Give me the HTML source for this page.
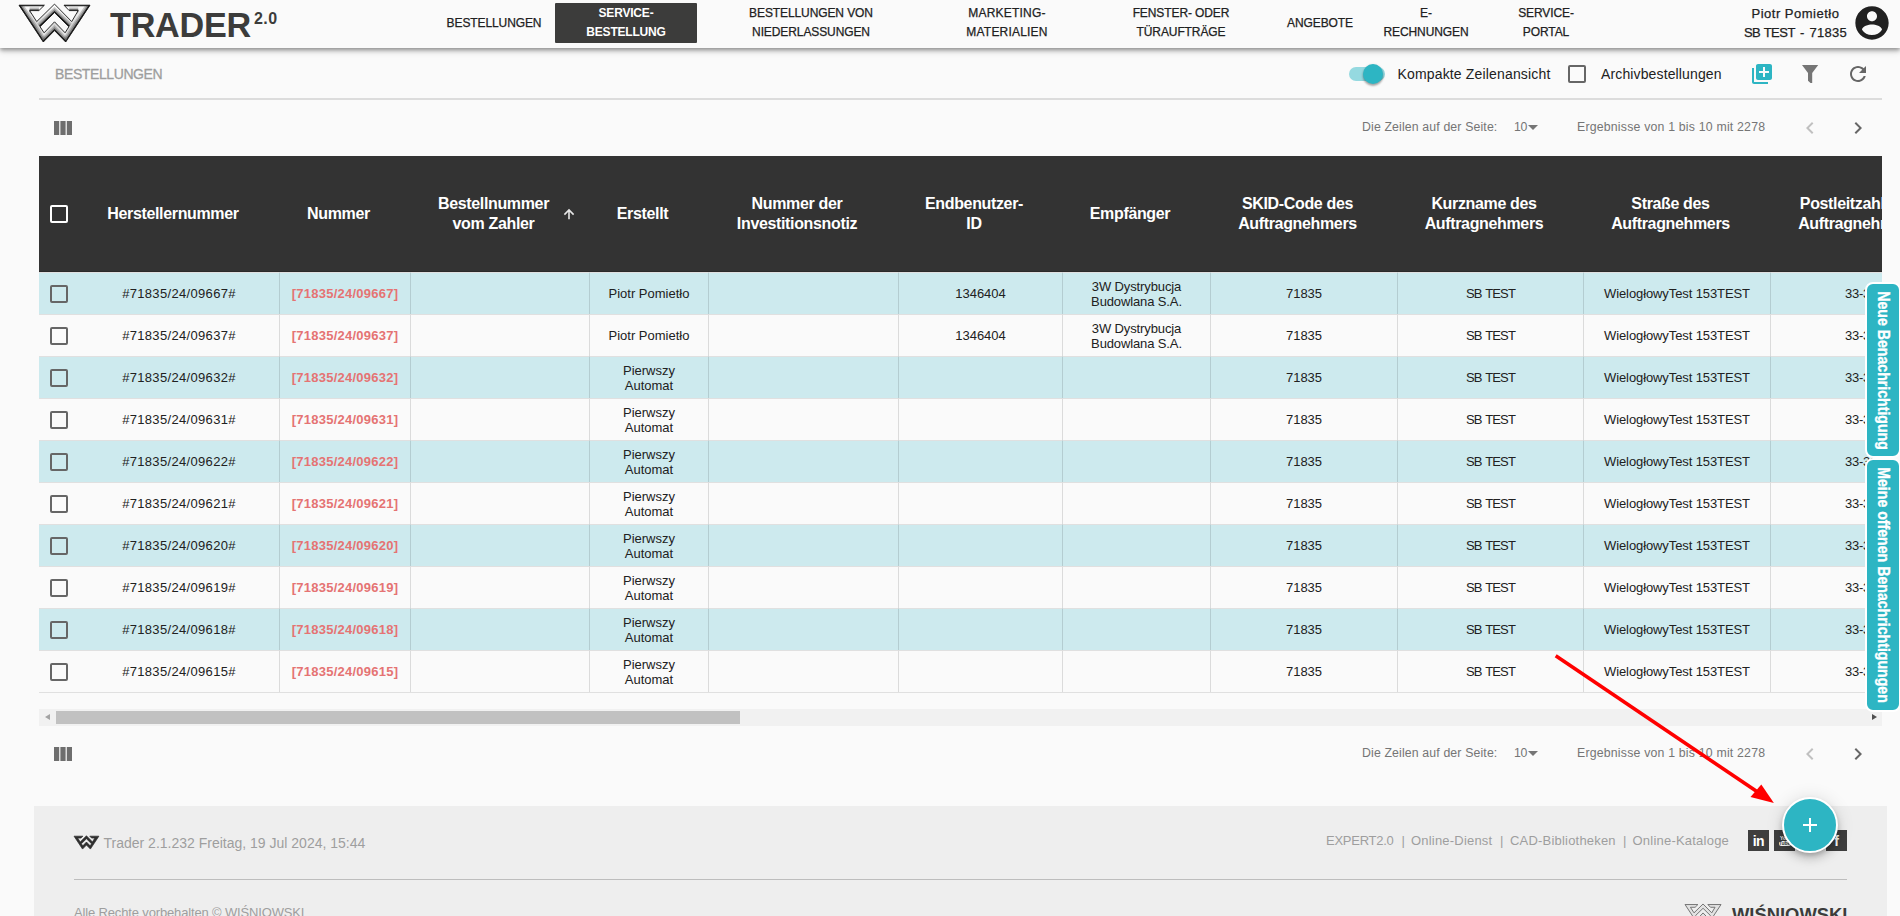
<!DOCTYPE html>
<html lang="de">
<head>
<meta charset="utf-8">
<title>Trader 2.0 - Bestellungen</title>
<style>
*{box-sizing:border-box;margin:0;padding:0}
html,body{width:1900px;height:916px;overflow:hidden;background:#fafafa;font-family:"Liberation Sans",sans-serif;color:#212121}
body{position:relative}
.abs{position:absolute}
/* header */
#hdr{position:absolute;left:0;top:0;width:1900px;height:48px;background:#fafafa;box-shadow:0 2px 4px rgba(0,0,0,.35),0 4px 6px rgba(0,0,0,.12);z-index:5}
#brand{position:absolute;left:110px;top:5px;font-weight:bold;font-size:34.2px;line-height:40px;color:#3c3c3b;letter-spacing:-.25px;white-space:nowrap}
#brand sup{position:absolute;left:144px;top:3.5px;font-size:16px;line-height:20px;letter-spacing:.4px}
.nav{position:absolute;top:3px;height:40px;display:flex;align-items:center;justify-content:center;text-align:center;font-size:12px;line-height:19px;letter-spacing:-.1px;color:#212121;white-space:nowrap;transform:translateX(-50%);-webkit-text-stroke:.25px #212121}
.nav.act{background:#3c3c3b;color:#fff;font-weight:bold;width:142px;transform:none;border-radius:1px;letter-spacing:-.2px;-webkit-text-stroke:0}
#user{position:absolute;left:1695.5px;width:200px;top:4px;text-align:center;font-size:13px;line-height:19px;color:#212121;white-space:nowrap;-webkit-text-stroke:.25px #212121}
/* sub bar */
#title{position:absolute;left:55px;top:64px;font-size:14px;line-height:20px;color:#9e9e9e;letter-spacing:-.4px;-webkit-text-stroke:.3px #9e9e9e}
#divider{position:absolute;left:39px;top:98px;width:1843px;height:2px;background:#dcdcdc}
.lbl{position:absolute;top:64px;font-size:14px;line-height:20px;color:#212121;white-space:nowrap}
.pg{position:absolute;font-size:12.3px;line-height:16px;color:#757575;white-space:nowrap;letter-spacing:.14px}
/* table */
#tblwrap{position:absolute;left:39px;top:156px;width:1843px;height:537px;overflow:hidden}
table{border-collapse:separate;border-spacing:0;table-layout:fixed;width:1918px}
th{background:#333;color:#fff;height:116px;font-size:16px;line-height:20px;font-weight:bold;letter-spacing:-.35px;text-align:center;vertical-align:middle;padding:1px 12px 0 0;border-bottom:1px solid #2a2a2a}
td{height:42px;font-size:13px;line-height:15px;text-align:center;vertical-align:middle;border-left:1px solid rgba(0,0,0,.12);border-top:1px solid #e0e0e0;color:#212121;padding:0 0 1px}
td.cb,td.num{border-left:0}
tr.odd td{background:#cdeaee}
tr.even td{background:#fafafa}
.chk{display:inline-block;width:18px;height:18px;border:2px solid #666;border-radius:2px;vertical-align:middle;position:relative;top:1px}
td.red{color:#e57373;font-weight:bold;letter-spacing:.25px}
td.num{letter-spacing:.33px}
.two{display:inline-block;position:relative;top:.7px}
td.emp{letter-spacing:-.12px}
td.kn{letter-spacing:-.85px;word-spacing:1px}
td.st{letter-spacing:-.1px}
td.plz{letter-spacing:-.25px}

.ico{position:absolute;width:24px;height:24px}
#toggle{position:absolute;left:1349px;top:67px;width:36px;height:14px;border-radius:7px;background:#95d9e0}
#thumb{position:absolute;left:1363px;top:64px;width:20px;height:20px;border-radius:50%;background:#2db5c3;box-shadow:0 2px 2px rgba(0,0,0,.24),0 1px 3px rgba(0,0,0,.2)}
#cb2{position:absolute;left:1568px;top:65px;width:18px;height:18px;border:2px solid #666;border-radius:2px}
#hs{position:absolute;left:39px;top:709px;width:1843px;height:17px;background:#f1f1f1}
#hs i{position:absolute;left:17px;top:2px;width:684px;height:13px;background:#c1c1c1}
#hs b{position:absolute;top:5px;width:0;height:0;border:3.5px solid transparent}
#footer{position:absolute;left:34px;top:806px;width:1853px;height:110px;background:#eeeeee}
#ftxt{position:absolute;left:103.5px;top:832.7px;font-size:14px;line-height:20px;color:#9e9e9e;white-space:nowrap}
.fl{position:absolute;top:832px;font-size:13px;line-height:18px;color:#9e9e9e;white-space:nowrap}
#fdiv{position:absolute;left:74px;top:879px;width:1773px;height:1px;background:#bdbdbd}
#copy{position:absolute;left:74px;top:904px;font-size:13px;line-height:18px;color:#9e9e9e;white-space:nowrap;letter-spacing:-.15px}
.soc{position:absolute;top:830px;width:21px;height:21px;background:#3e3e3e;color:#fff;font-weight:bold;font-size:14px;line-height:22px;text-align:center;overflow:hidden}
#fab{position:absolute;left:1782.1px;top:797.1px;width:56px;height:56px;border-radius:50%;background:#2db5c3;border:2px solid #fff;box-shadow:0 3px 5px -1px rgba(0,0,0,.2),0 6px 10px rgba(0,0,0,.14),0 1px 18px rgba(0,0,0,.12);z-index:9}
.tab{position:absolute;left:1865px;width:36px;background:#2db5c3;border:2px solid #fff;border-radius:8px;z-index:8}
.tab svg{position:absolute;left:-2px;top:-2px;overflow:visible}
.tab text{font-family:"Liberation Sans",sans-serif;font-weight:bold;font-size:16px;fill:#fff;stroke:#fff;stroke-width:.35px}
#wbrand{position:absolute;left:1732px;top:902.3px;font-weight:bold;font-size:18.4px;line-height:26px;color:#3c3c3b;white-space:nowrap}
</style>
</head>
<body>
<div id="hdr">
  <svg class="abs" style="left:0;top:0;z-index:6" width="110" height="48" viewBox="0 0 110 48">
<defs>
<linearGradient id="lg1" x1="0" y1="0" x2="0" y2="1"><stop offset="0" stop-color="#ffffff"/><stop offset=".55" stop-color="#d6d6d6"/><stop offset="1" stop-color="#f2f2f2"/></linearGradient>
<clipPath id="wclip"><path clip-rule="evenodd" d="M19 5.2H44.4L38.9 10.6H29.6L36.7 21.6L54.5 4.1L71.7 21.6L78.2 10.6H69.2L64 5.2H90L65.7 42L54.5 30.6L43.3 42ZM54.5 12.6L68.9 26.7L65.1 32.8L54.5 21.8L44.1 32.8L40 26.7Z"/></clipPath>
</defs>
<path fill="url(#lg1)" fill-rule="evenodd" d="M19 5.2H44.4L38.9 10.6H29.6L36.7 21.6L54.5 4.1L71.7 21.6L78.2 10.6H69.2L64 5.2H90L65.7 42L54.5 30.6L43.3 42ZM54.5 12.6L68.9 26.7L65.1 32.8L54.5 21.8L44.1 32.8L40 26.7Z"/>
<g clip-path="url(#wclip)" fill="none" stroke-linejoin="miter">
<path stroke="#666" stroke-width="8" stroke-opacity=".35" d="M19 5.2L43.3 42M90 5.2L65.7 42"/><path stroke="#555" stroke-width="5" stroke-opacity=".5" d="M19 5.2L43.3 42M90 5.2L65.7 42"/>
<path stroke="#151515" stroke-width="2.2" d="M19 5.2L43.3 42M90 5.2L65.7 42"/>
<path stroke="#666" stroke-width="8" stroke-opacity=".35" d="M40 26.7L54.5 12.6L68.9 26.7M43.3 42L54.5 30.6L65.7 42"/><path stroke="#555" stroke-width="5" stroke-opacity=".5" d="M40 26.7L54.5 12.6L68.9 26.7M43.3 42L54.5 30.6L65.7 42"/>
<path stroke="#111" stroke-width="2.4" d="M40 26.7L54.5 12.6L68.9 26.7M43.3 42L54.5 30.6L65.7 42"/>
<path stroke="#666" stroke-width="6" stroke-opacity=".4" d="M29.6 10.6H38.9M69.2 10.6H78.2"/><path stroke="#222" stroke-width="2.4" d="M29.6 10.6H38.9M69.2 10.6H78.2"/>
<path stroke="#111" stroke-width="2" d="M19 5.2H44.4M64 5.2H90"/>
</g>
<path fill="none" stroke="#1a1a1a" stroke-width=".9" stroke-linejoin="miter" d="M19 5.2H44.4L38.9 10.6H29.6L36.7 21.6L54.5 4.1L71.7 21.6L78.2 10.6H69.2L64 5.2H90L65.7 42L54.5 30.6L43.3 42ZM54.5 12.6L68.9 26.7L65.1 32.8L54.5 21.8L44.1 32.8L40 26.7Z"/>
</svg>
  <div id="brand">TRADER<sup>2.0</sup></div>
  <div class="nav" style="left:494px">BESTELLUNGEN</div>
  <div class="nav act" style="left:555px">SERVICE-<br>BESTELLUNG</div>
  <div class="nav" style="left:811px">BESTELLUNGEN VON<br>NIEDERLASSUNGEN</div>
  <div class="nav" style="left:1007px;letter-spacing:.2px">MARKETING-<br>MATERIALIEN</div>
  <div class="nav" style="left:1181px">FENSTER- ODER<br>TÜRAUFTRÄGE</div>
  <div class="nav" style="left:1320px">ANGEBOTE</div>
  <div class="nav" style="left:1426px">E-<br>RECHNUNGEN</div>
  <div class="nav" style="left:1546px">SERVICE-<br>PORTAL</div>
  <div id="user"><span style="letter-spacing:.5px">Piotr Pomietło</span><br><span style="letter-spacing:-.5px;word-spacing:.5px">SB TEST</span><span style="word-spacing:1.5px"> - </span><span style="letter-spacing:.3px">71835</span></div>
</div>
<div id="title">BESTELLUNGEN</div>
<div id="divider"></div>
<div class="lbl" style="left:1397.5px;letter-spacing:.16px">Kompakte Zeilenansicht</div>
<div class="lbl" style="left:1601px;letter-spacing:.13px">Archivbestellungen</div>

<div class="pg" style="left:1362px;top:119px">Die Zeilen auf der Seite:</div>
<div class="pg" style="left:1514px;top:119px;letter-spacing:-.4px">10</div>
<div class="pg" style="left:1577px;top:119px;letter-spacing:.2px">Ergebnisse von 1 bis 10 mit 2278</div>

<div id="tblwrap">
<table>
<colgroup><col style="width:40px"><col style="width:200px"><col style="width:131px"><col style="width:179px"><col style="width:119px"><col style="width:190px"><col style="width:164px"><col style="width:148px"><col style="width:187px"><col style="width:186px"><col style="width:187px"><col style="width:187px"></colgroup>
<thead><tr>
<th style="padding:1px 0 0"><span class="chk" style="border-color:#fff;top:-1px"></span></th>
<th>Herstellernummer</th><th>Nummer</th><th>Bestellnummer<br>vom Zahler</th><th>Erstellt</th><th>Nummer der<br>Investitionsnotiz</th><th>Endbenutzer-<br>ID</th><th>Empfänger</th><th>SKID-Code des<br>Auftragnehmers</th><th>Kurzname des<br>Auftragnehmers</th><th>Straße des<br>Auftragnehmers</th><th>Postleitzahl des<br>Auftragnehmers</th>
</tr></thead>
<tbody>
<tr class="odd"><td class="cb"><span class="chk"></span></td><td class="num">#71835/24/09667#</td><td class="red">[71835/24/09667]</td><td></td><td class="er"><span class="two">Piotr Pomietło</span></td><td></td><td class="eid">1346404</td><td class="emp"><span class="two">3W Dystrybucja<br>Budowlana S.A.</span></td><td class="skid">71835</td><td class="kn">SB TEST</td><td class="st">WielogłowyTest 153TEST</td><td class="plz"><span>33-311</span></td></tr>
<tr class="even"><td class="cb"><span class="chk"></span></td><td class="num">#71835/24/09637#</td><td class="red">[71835/24/09637]</td><td></td><td class="er"><span class="two">Piotr Pomietło</span></td><td></td><td class="eid">1346404</td><td class="emp"><span class="two">3W Dystrybucja<br>Budowlana S.A.</span></td><td class="skid">71835</td><td class="kn">SB TEST</td><td class="st">WielogłowyTest 153TEST</td><td class="plz"><span>33-311</span></td></tr>
<tr class="odd"><td class="cb"><span class="chk"></span></td><td class="num">#71835/24/09632#</td><td class="red">[71835/24/09632]</td><td></td><td class="er"><span class="two">Pierwszy<br>Automat</span></td><td></td><td class="eid"></td><td class="emp"><span class="two"></span></td><td class="skid">71835</td><td class="kn">SB TEST</td><td class="st">WielogłowyTest 153TEST</td><td class="plz"><span>33-311</span></td></tr>
<tr class="even"><td class="cb"><span class="chk"></span></td><td class="num">#71835/24/09631#</td><td class="red">[71835/24/09631]</td><td></td><td class="er"><span class="two">Pierwszy<br>Automat</span></td><td></td><td class="eid"></td><td class="emp"><span class="two"></span></td><td class="skid">71835</td><td class="kn">SB TEST</td><td class="st">WielogłowyTest 153TEST</td><td class="plz"><span>33-311</span></td></tr>
<tr class="odd"><td class="cb"><span class="chk"></span></td><td class="num">#71835/24/09622#</td><td class="red">[71835/24/09622]</td><td></td><td class="er"><span class="two">Pierwszy<br>Automat</span></td><td></td><td class="eid"></td><td class="emp"><span class="two"></span></td><td class="skid">71835</td><td class="kn">SB TEST</td><td class="st">WielogłowyTest 153TEST</td><td class="plz"><span>33-311</span></td></tr>
<tr class="even"><td class="cb"><span class="chk"></span></td><td class="num">#71835/24/09621#</td><td class="red">[71835/24/09621]</td><td></td><td class="er"><span class="two">Pierwszy<br>Automat</span></td><td></td><td class="eid"></td><td class="emp"><span class="two"></span></td><td class="skid">71835</td><td class="kn">SB TEST</td><td class="st">WielogłowyTest 153TEST</td><td class="plz"><span>33-311</span></td></tr>
<tr class="odd"><td class="cb"><span class="chk"></span></td><td class="num">#71835/24/09620#</td><td class="red">[71835/24/09620]</td><td></td><td class="er"><span class="two">Pierwszy<br>Automat</span></td><td></td><td class="eid"></td><td class="emp"><span class="two"></span></td><td class="skid">71835</td><td class="kn">SB TEST</td><td class="st">WielogłowyTest 153TEST</td><td class="plz"><span>33-311</span></td></tr>
<tr class="even"><td class="cb"><span class="chk"></span></td><td class="num">#71835/24/09619#</td><td class="red">[71835/24/09619]</td><td></td><td class="er"><span class="two">Pierwszy<br>Automat</span></td><td></td><td class="eid"></td><td class="emp"><span class="two"></span></td><td class="skid">71835</td><td class="kn">SB TEST</td><td class="st">WielogłowyTest 153TEST</td><td class="plz"><span>33-311</span></td></tr>
<tr class="odd"><td class="cb"><span class="chk"></span></td><td class="num">#71835/24/09618#</td><td class="red">[71835/24/09618]</td><td></td><td class="er"><span class="two">Pierwszy<br>Automat</span></td><td></td><td class="eid"></td><td class="emp"><span class="two"></span></td><td class="skid">71835</td><td class="kn">SB TEST</td><td class="st">WielogłowyTest 153TEST</td><td class="plz"><span>33-311</span></td></tr>
<tr class="even"><td class="cb"><span class="chk"></span></td><td class="num">#71835/24/09615#</td><td class="red">[71835/24/09615]</td><td></td><td class="er"><span class="two">Pierwszy<br>Automat</span></td><td></td><td class="eid"></td><td class="emp"><span class="two"></span></td><td class="skid">71835</td><td class="kn">SB TEST</td><td class="st">WielogłowyTest 153TEST</td><td class="plz"><span>33-311</span></td></tr>
</tbody>
</table>
</div>

<!-- toolbar -->
<div id="toggle"></div><div id="thumb"></div>
<div id="cb2"></div>
<svg class="ico" style="left:1750px;top:62px" viewBox="0 0 24 24"><path fill="#2db5c3" d="M4 6H2v14c0 1.1.9 2 2 2h14v-2H4V6zm16-4H8c-1.1 0-2 .9-2 2v12c0 1.1.9 2 2 2h12c1.1 0 2-.9 2-2V4c0-1.1-.9-2-2-2zm-1 9h-4v4h-2v-4H9V9h4V5h2v4h4v2z"/></svg>
<svg class="ico" style="left:1798px;top:62px" viewBox="0 0 24 24"><path fill="#757575" d="M4 3h16.2l-6 8v10h-1.7l-2.5-2.2V11z"/></svg>
<svg class="ico" style="left:1846px;top:62px" viewBox="0 0 24 24"><path fill="#666" d="M17.65 6.35C16.2 4.9 14.21 4 12 4c-4.42 0-7.99 3.58-7.99 8s3.57 8 7.99 8c3.73 0 6.84-2.55 7.73-6h-2.08c-.82 2.33-3.04 4-5.65 4-3.31 0-6-2.69-6-6s2.69-6 6-6c1.66 0 3.14.69 4.22 1.78L13 11h7V4l-2.35 2.35z"/></svg>
<!-- column icons -->
<svg class="abs" style="left:54px;top:121px" width="18" height="14"><path fill="#6e6e6e" d="M0 0h5.2v14H0zM6.4 0h5.2v14H6.4zM12.8 0H18v14h-5.2z"/></svg>
<svg class="abs" style="left:54px;top:747px" width="18" height="14"><path fill="#6e6e6e" d="M0 0h5.2v14H0zM6.4 0h5.2v14H6.4zM12.8 0H18v14h-5.2z"/></svg>
<!-- paginator icons -->
<svg class="abs" style="left:1528px;top:125px" width="10" height="5"><path fill="#757575" d="M0 0h10L5 5z"/></svg>
<svg class="ico" style="left:1798px;top:116px" viewBox="0 0 24 24"><path fill="#c0c0c0" d="M15.41 7.41L14 6l-6 6 6 6 1.41-1.41L10.83 12z"/></svg>
<svg class="ico" style="left:1846px;top:116px" viewBox="0 0 24 24"><path fill="#666" d="M10 6L8.59 7.41 13.17 12l-4.58 4.59L10 18l6-6z"/></svg>
<svg class="abs" style="left:1528px;top:751px" width="10" height="5"><path fill="#757575" d="M0 0h10L5 5z"/></svg>
<svg class="ico" style="left:1798px;top:742px" viewBox="0 0 24 24"><path fill="#c0c0c0" d="M15.41 7.41L14 6l-6 6 6 6 1.41-1.41L10.83 12z"/></svg>
<svg class="ico" style="left:1846px;top:742px" viewBox="0 0 24 24"><path fill="#666" d="M10 6L8.59 7.41 13.17 12l-4.58 4.59L10 18l6-6z"/></svg>
<div class="pg" style="left:1362px;top:745px">Die Zeilen auf der Seite:</div>
<div class="pg" style="left:1514px;top:745px;letter-spacing:-.4px">10</div>
<div class="pg" style="left:1577px;top:745px;letter-spacing:.2px">Ergebnisse von 1 bis 10 mit 2278</div>
<svg class="abs" style="left:560px;top:205px" width="18" height="18"><path d="M9 14.2V5.4M4.4 9.6L9 5L13.6 9.6" stroke="#e6e6e6" stroke-width="1.6" fill="none"/></svg>
<div class="abs" style="left:39px;top:692px;width:1843px;height:1px;background:#e0e0e0"></div>
<!-- scrollbar -->
<div id="hs"><b style="left:5.5px;border-right:5px solid #a3a3a3;border-left:0"></b><i></i><b style="left:1833px;border-left:5px solid #505050;border-right:0"></b></div>
<!-- footer -->
<div id="footer"></div>
<svg class="abs" style="left:0;top:0" width="1900" height="916"><path fill="#2e2e2e" stroke="#2e2e2e" stroke-width="2" fill-rule="evenodd" transform="translate(67.34 834.36) scale(.3507)" d="M19 5.2H44.4L38.9 10.6H29.6L36.7 21.6L54.5 4.1L71.7 21.6L78.2 10.6H69.2L64 5.2H90L65.7 42L54.5 30.6L43.3 42ZM54.5 12.6L68.9 26.7L65.1 32.8L54.5 21.8L44.1 32.8L40 26.7Z"/><path fill="#e2e2e2" stroke="#707070" stroke-width="1.9" fill-rule="evenodd" transform="translate(1675.4 901.9) scale(.507)" d="M19 5.2H44.4L38.9 10.6H29.6L36.7 21.6L54.5 4.1L71.7 21.6L78.2 10.6H69.2L64 5.2H90L65.7 42L54.5 30.6L43.3 42ZM54.5 12.6L68.9 26.7L65.1 32.8L54.5 21.8L44.1 32.8L40 26.7Z"/></svg>
<div id="ftxt">Trader 2.1.232 Freitag, 19 Jul 2024, 15:44</div>
<div class="fl" style="left:1326px;letter-spacing:-.25px">EXPERT2.0</div>
<div class="fl" style="left:1401.5px">|</div>
<div class="fl" style="left:1411px;letter-spacing:.2px">Online-Dienst</div>
<div class="fl" style="left:1500px">|</div>
<div class="fl" style="left:1510px;letter-spacing:.2px">CAD-Bibliotheken</div>
<div class="fl" style="left:1623px">|</div>
<div class="fl" style="left:1632.5px;letter-spacing:.22px">Online-Kataloge</div>
<div class="soc" style="left:1748px;letter-spacing:-.7px;text-indent:-.5px">in</div>
<div class="soc" style="left:1774px"><span style="position:absolute;left:6px;top:4.5px;font-size:5px;line-height:6px;letter-spacing:0">You</span><span style="position:absolute;left:4.5px;top:10.5px;width:12px;height:5.5px;border-radius:2.5px;background:#fff;color:#3e3e3e;font-size:5px;line-height:5.5px;letter-spacing:0">Tube</span></div>
<div class="soc" style="left:1800px"></div>
<div class="soc" style="left:1826px">f</div>
<div id="fdiv"></div>
<div id="copy">Alle Rechte vorbehalten © WIŚNIOWSKI</div>
<div id="wbrand">WIŚNIOWSKI</div>
<!-- red arrow -->
<svg class="abs" style="left:0;top:0;z-index:7" width="1900" height="916"><path d="M1555.7 655.7L1758 792.3" stroke="#ff0000" stroke-width="3.6" fill="none"/><path fill="#ff0000" d="M1773.9 803.1L1761.3 784.6L1750.5 796.9z"/></svg>
<!-- FAB -->
<div id="fab"><svg style="position:absolute;left:14px;top:14px" width="24" height="24" viewBox="0 0 24 24"><path fill="#fff" d="M19 13h-6v6h-2v-6H5v-2h6V5h2v6h6v2z"/></svg></div>
<!-- side tabs -->
<div class="tab" style="top:282px;height:175.75px"><svg width="36" height="176"><text transform="translate(12.7 9.2) rotate(90) scale(.884 1)">Neue Benachrichtigung</text></svg></div>
<div class="tab" style="top:458.1px;height:254px"><svg width="36" height="254"><text transform="translate(12.7 9.2) rotate(90) scale(.884 1)">Meine offenen Benachrichtigungen</text></svg></div>
<!-- avatar -->
<svg class="abs" style="left:1852px;top:2.6px;z-index:6" width="40" height="40" viewBox="0 0 24 24"><path fill="#212121" d="M12 2C6.48 2 2 6.48 2 12s4.48 10 10 10 10-4.48 10-10S17.52 2 12 2zm0 3c1.66 0 3 1.34 3 3s-1.34 3-3 3-3-1.34-3-3 1.34-3 3-3zm0 14.2c-2.5 0-4.71-1.28-6-3.22.03-1.99 4-3.08 6-3.08 1.99 0 5.97 1.09 6 3.08-1.29 1.94-3.5 3.22-6 3.22z"/></svg>
</body>
</html>
